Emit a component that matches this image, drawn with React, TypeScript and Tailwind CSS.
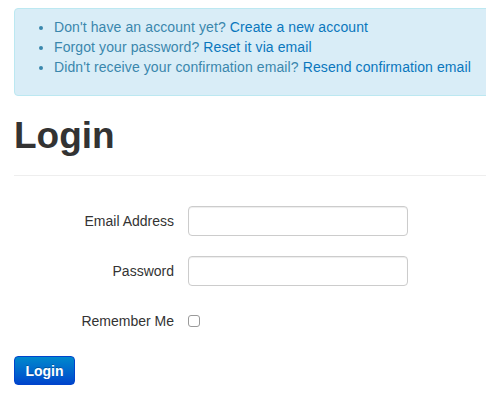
const links = [
  { q: "Don't have an account yet?", a: "Create a new account" },
  { q: "Forgot your password?", a: "Reset it via email" },
  { q: "Didn't receive your confirmation email?", a: "Resend confirmation email" },
];

function Field({ label, type }: { label: string; type: string }) {
  return (
    <div className="mb-[20px] flex items-center">
      <label className="w-[160px] text-right">{label}</label>
      <input
        type={type}
        className="ml-[14px] h-[30px] w-[220px] rounded-[4px] border border-[#ccc] bg-white px-[6px] shadow-[inset_0_1px_1px_rgba(0,0,0,0.075)] outline-none"
      />
    </div>
  );
}

export default function App() {
  return (
    <div
      className="w-full overflow-hidden bg-white text-[14px] leading-[20px] text-[#333]"
      style={{ fontFamily: '"Liberation Sans", Helvetica, Arial, sans-serif' }}
    >
      <div className="ml-[14px] w-[940px] pt-[8px]">
        <div className="mb-[20px] rounded-[4px] border border-[#bce8f1] bg-[#d9edf7] py-[8px] pr-[35px] pl-[14px] text-[#3a87ad] tracking-[0.1px]">
          <ul className="mb-[10px] ml-[25px] list-disc">
            {links.map((l) => (
              <li key={l.a}>
                {l.q} <a className="text-[#0a77bd]">{l.a}</a>
              </li>
            ))}
          </ul>
        </div>

        <div className="mb-[30px] border-b border-[#eee] pb-[9px]">
          <h1 className="text-[37px] leading-[40px] font-bold text-[#333]">Login</h1>
          <div className="h-[10px]" />
        </div>

        <form>
          <Field label="Email Address" type="email" />
          <Field label="Password" type="password" />
          <div className="mb-[20px] flex h-[30px] items-center">
            <label className="w-[160px] text-right">Remember Me</label>
            <span className="ml-[14px] inline-block h-[12px] w-[12px] rounded-[3px] border border-[#9a9a9a] bg-white" />
          </div>
          <button
            type="button"
            className="h-[29px] w-[61px] rounded-[4px] border border-[#0044cc] bg-gradient-to-b from-[#0088cc] to-[#0044cc] font-bold text-white [text-shadow:0_-1px_0_rgba(0,0,0,0.25)]"
          >
            Login
          </button>
        </form>
      </div>
    </div>
  );
}
